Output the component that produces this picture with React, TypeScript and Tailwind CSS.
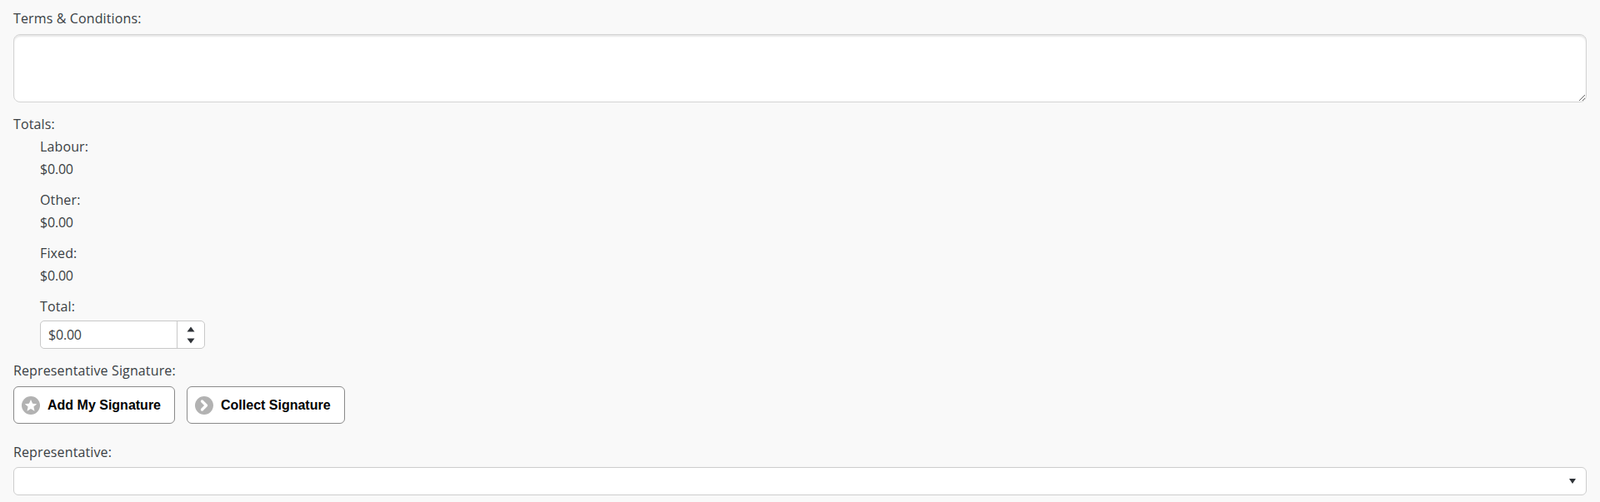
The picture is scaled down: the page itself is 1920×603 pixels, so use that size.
import { ChevronRight } from "lucide-react";

const openSans = "font-['Open_Sans',sans-serif]";
const label = "h-[27px] leading-[27px] tracking-[0.13px]";

function Amount({ name }: { name: string }) {
  return (
    <div className="mb-[10px]">
      <div className={label}>{name}:</div>
      <div className="h-[27px] leading-[27px] tracking-[-0.2px]">$0.00</div>
    </div>
  );
}

function SignatureButton({ text, icon }: { text: string; icon: "star" | "next" }) {
  return (
    <button
      type="button"
      className="flex h-[45px] items-center rounded-[6px] border border-[#8a8a8a] bg-white pl-[9px] pr-[16px] font-['Liberation_Sans',sans-serif] text-[16px] font-bold text-black"
    >
      <span className="mr-[9px] flex h-[22px] w-[22px] items-center justify-center rounded-full bg-[#b2b2b2]">
        {icon === "star" ? (
          <svg width="16" height="16" viewBox="0 0 16 16" className="fill-white">
            <path d="M8 1 10.1 5.7 15.2 6.2 11.4 9.6 12.5 14.7 8 12.1 3.5 14.7 4.6 9.6 0.8 6.2 5.9 5.7Z" />
          </svg>
        ) : (
          <ChevronRight className="h-[20px] w-[20px] text-white" strokeWidth={4} />
        )}
      </span>
      {text}
    </button>
  );
}

export default function App() {
  return (
    <div className={`min-h-[603px] bg-[#f9f9f9] pl-[16px] pr-[16px] pt-[9px] text-[16px] text-[#3a3f44] ${openSans}`}>
      <div className={label}>Terms &amp; Conditions:</div>
      <textarea className="mt-[5px] block h-[82px] w-full rounded-[8px] border border-[#d4d4d4] bg-white shadow-[inset_0_2px_2px_rgba(0,0,0,0.1)] outline-none" />

      <div className={`mt-[13px] ${label}`}>Totals:</div>
      <div className="pl-[32px]">
        <Amount name="Labour" />
        <Amount name="Other" />
        <Amount name="Fixed" />
        <div className={label}>Total:</div>
        <div className="mt-[3px] flex h-[34px] w-[198px] rounded-[5px] border border-[#c8c8c8] bg-white">
          <input
            readOnly
            value="$0.00"
            className="w-[164px] min-w-0 border-r border-[#c8c8c8] bg-transparent pl-[9px] text-[16px] tracking-[-0.2px] text-[#3a3f44] outline-none"
          />
          <div className="flex flex-1 flex-col items-center justify-center gap-[7px]">
            <svg width="10" height="7" viewBox="0 0 10 7" className="fill-[#2f3338]">
              <path d="M5 0.5 9.5 6.5H0.5Z" />
            </svg>
            <svg width="10" height="7" viewBox="0 0 10 7" className="fill-[#2f3338]">
              <path d="M0.5 0.5H9.5L5 6.5Z" />
            </svg>
          </div>
        </div>
      </div>

      <div className={`mt-[13px] ${label}`}>Representative Signature:</div>
      <div className="mt-[5px] flex gap-[14px]">
        <SignatureButton text="Add My Signature" icon="star" />
        <SignatureButton text="Collect Signature" icon="next" />
      </div>

      <div className={`mt-[21px] ${label}`}>Representative:</div>
      <div className="mt-[4px] flex h-[34px] items-center justify-end rounded-[6px] border border-[#cdcdcd] bg-white pr-[12px]">
        <svg width="8" height="6" viewBox="0 0 8 6" className="fill-[#2f3338]">
          <path d="M0 0H8L4 6Z" />
        </svg>
      </div>
    </div>
  );
}
